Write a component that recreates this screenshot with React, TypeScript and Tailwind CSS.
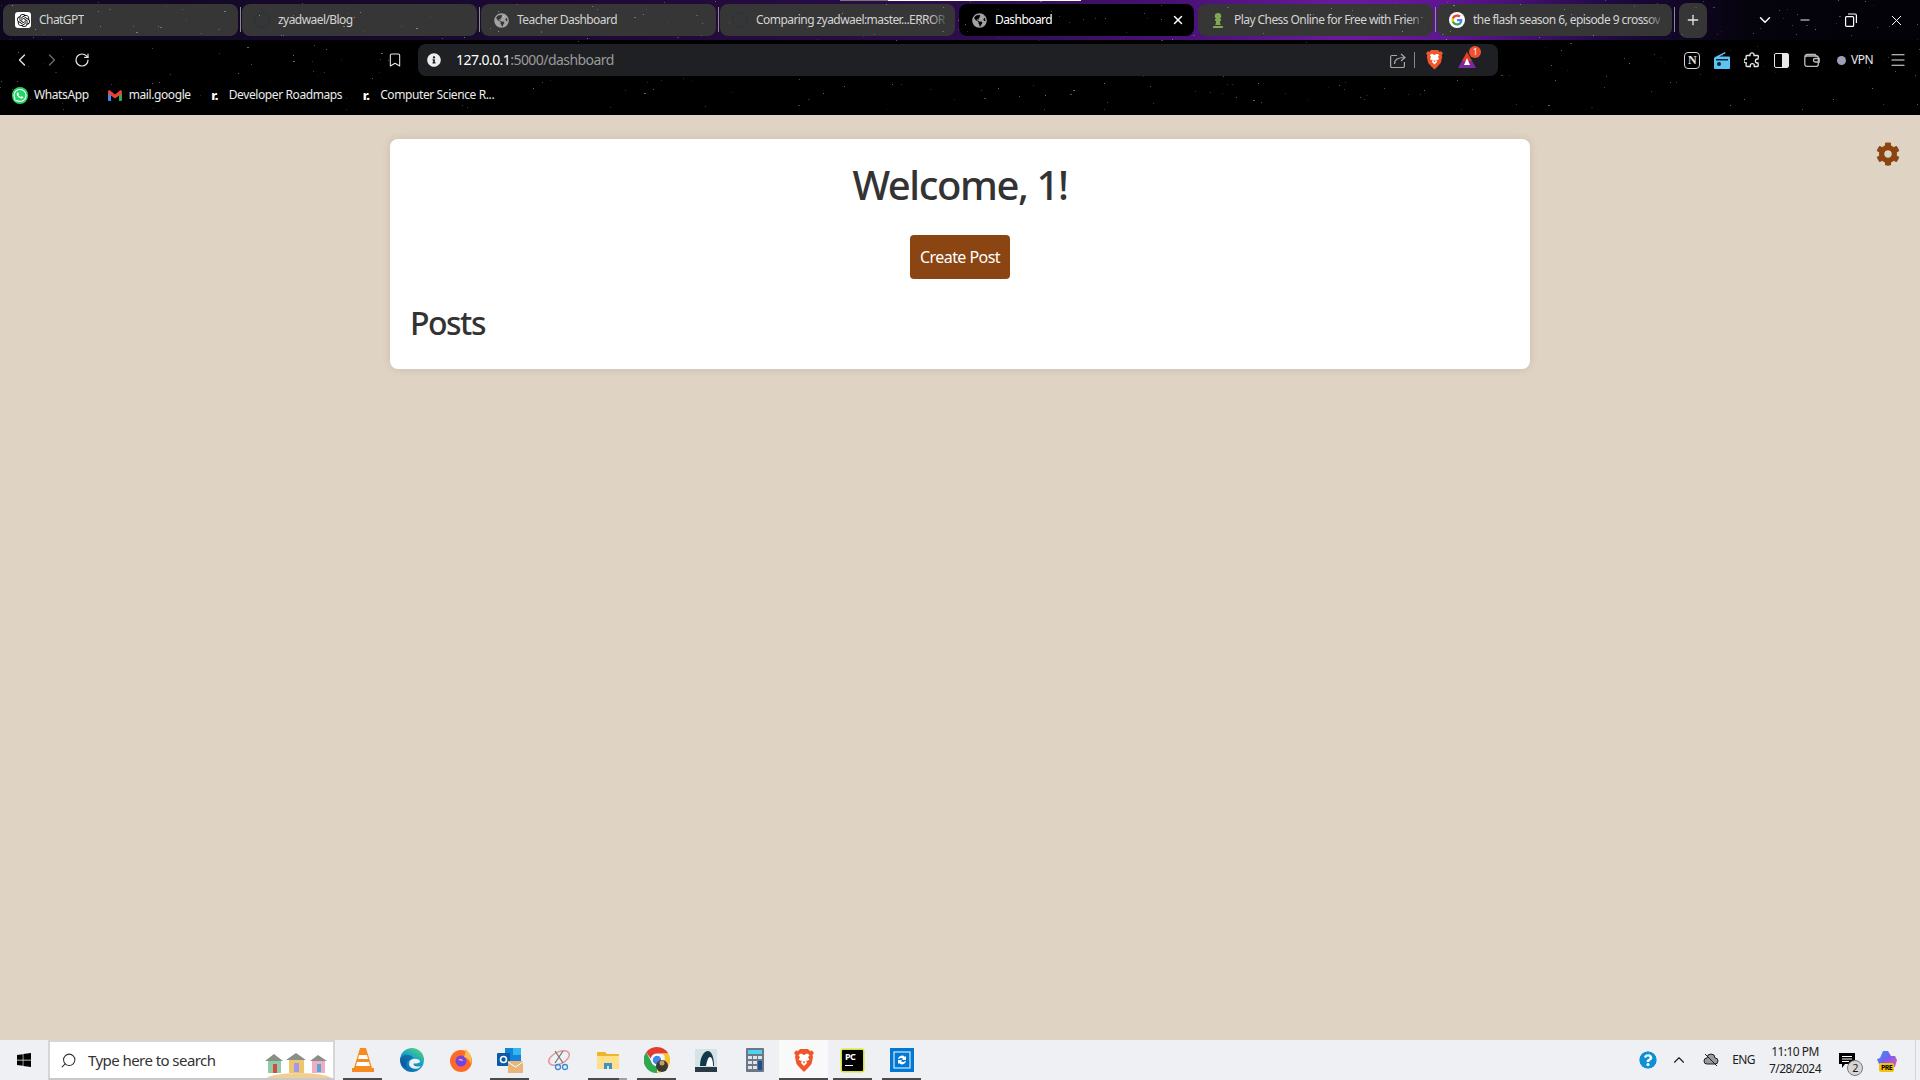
import {
  ChevronDown,
  ChevronLeft,
  ChevronRight,
  Bookmark,
  Menu,
  Minus,
  Plus,
  RotateCw,
  Search,
  X,
} from "lucide-react";
import { FaChessPawn, FaCog, FaGlobeAmericas, FaInfoCircle, FaQuestionCircle, FaWhatsapp, FaWindows } from "react-icons/fa";
import { SiOpenai } from "react-icons/si";
import type { ReactNode } from "react";

const uiFont = "[font-family:'Noto_Sans',sans-serif] tracking-[-0.56px]";

function Stars({ count, seed, height }: { count: number; seed: number; height: number }) {
  const dots = [];
  let s = seed;
  const next = () => {
    s = (s * 16807) % 2147483647;
    return s / 2147483647;
  };
  for (let i = 0; i < count; i++) {
    dots.push(
      <rect key={i} x={Math.floor(next() * 1920)} y={Math.floor(next() * height)} width={next() > 0.85 ? 2 : 1} height={1} fill="#fff" opacity={0.08 + next() * 0.35} />
    );
  }
  return (
    <svg className="absolute inset-0 pointer-events-none" width={1920} height={height}>
      {dots}
    </svg>
  );
}

function GoogleG({ size = 16 }: { size?: number }) {
  return (
    <svg width={size} height={size} viewBox="0 0 24 24">
      <circle cx="12" cy="12" r="12" fill="#fff" />
      <path fill="#4285F4" d="M20 12.200c0-.6-.1-1.100-.2-1.600H12v3.100h4.500c-.2 1-.8 1.900-1.700 2.500v2h2.700c1.600-1.400 2.500-3.500 2.500-6z" />
      <path fill="#34A853" d="M12 20.300c2.200 0 4.100-.7 5.500-2.100l-2.700-2c-.7.500-1.700.8-2.800.8-2.200 0-4-1.500-4.600-3.400H4.600v2.100c1.400 2.700 4.200 4.600 7.400 4.600z" />
      <path fill="#FBBC05" d="M7.400 13.600c-.3-1-.3-2.100 0-3.100V8.400H4.600c-1.100 2.200-1.100 5 0 7.300l2.800-2.100z" />
      <path fill="#EA4335" d="M12 7c1.200 0 2.300.4 3.200 1.200l2.400-2.400C16.100 4.400 14.200 3.700 12 3.700c-3.200 0-6 1.800-7.400 4.700l2.800 2.100C8 8.500 9.800 7 12 7z" />
    </svg>
  );
}

function BraveLion({ size = 18 }: { size?: number }) {
  return (
    <svg width={size} height={size * 1.15} viewBox="0 0 20 23">
      <path fill="#F1562B" d="M6 0h8l2 2 2-.5L20 4l-1.500 2 .5 2-1.500 7L14 19l-4 4-4-4-3.500-4L1 8l.5-2L0 4l2-2.500L4 2z" />
      <path fill="#fff" d="M10 6 7 4.500 4.500 6 6 8.500 4.500 10.500l2.500 1.500 1-1-1 3 3 3 3-3-1-3 1 1 2.500-1.500L14 8.500 15.500 6 13 4.500z" />
      <path fill="#F1562B" d="M8.500 12.500h3L10 14.500z" />
    </svg>
  );
}

function Tab({ icon, title, active, fade, sep }: { icon?: ReactNode; title: string; active?: boolean; fade?: boolean; sep?: boolean }) {
  return (
    <div
      className={`relative flex h-8 w-[235px] shrink-0 items-center rounded-lg pl-[10px] pr-[6px] text-xs ${
        active ? "bg-black text-white" : "bg-[#363636] text-[#d4d4d4]"
      }`}
    >
      <span className="flex w-[20px] shrink-0 items-center justify-center">{icon}</span>
      <span className="ml-[6px] overflow-hidden whitespace-nowrap">{title}</span>
      {fade && <span className="absolute right-[6px] h-full w-5 bg-gradient-to-r from-transparent to-[#363636]" />}
      {active && <X size={14} strokeWidth={2.5} className="ml-auto mr-[3px] shrink-0 text-white" />}
      {sep && <span className="absolute -right-[3px] top-[3px] h-[25px] w-px bg-[#8a8a8a]" />}
    </div>
  );
}

function BookmarkItem({ icon, label }: { icon: ReactNode; label: string }) {
  return (
    <div className="flex items-center gap-[6px] text-xs tracking-[-0.4px] text-[#ececec]">
      <span className="flex w-4 items-center justify-center">{icon}</span>
      <span className="whitespace-nowrap">{label}</span>
    </div>
  );
}

function TaskIcon({ children, bar, active, stacked }: { children: ReactNode; bar?: boolean; active?: boolean; stacked?: boolean }) {
  return (
    <div className={`relative flex h-10 w-[49px] items-center justify-center ${active ? "bg-[#f9f9fa]" : ""}`}>
      {children}
      {bar && (
        <span className={`absolute bottom-0 h-[2px] ${active ? "inset-x-0" : "inset-x-[5px]"} ${stacked ? "bg-gradient-to-r from-[#4a4a4a] from-[80%] to-[#a0a0a0] to-[80%]" : "bg-[#4a4a4a]"}`} />
      )}
    </div>
  );
}

export default function App() {
  return (
    <div className={`flex h-screen w-[1920px] flex-col overflow-hidden bg-[#dfd3c3] ${uiFont}`}>
      {/* browser chrome */}
      <header className="relative h-[115px] shrink-0 bg-black">
        <div className="relative flex h-10 items-center bg-[linear-gradient(90deg,#0f0720_0%,#1d0a33_30%,#2c0d4c_50%,#4a1278_62%,#6a1a9c_70%,#5c1590_76%,#1e0a40_84%,#05030c_91%,#020208_100%)]">
          <div className="absolute left-[840px] top-0 h-px w-[241px] bg-gradient-to-r from-[#777] from-20% to-white to-20%" />
          <div className="relative flex items-center gap-1 pl-[3px]">
            <Tab sep icon={<span className="flex h-4 w-4 items-center justify-center rounded-[3px] bg-white text-black"><SiOpenai size={13} /></span>} title="ChatGPT" />
            <Tab sep icon={<span className="h-4 w-4 rounded-full border border-[#26343d]" />} title="zyadwael/Blog" />
            <Tab sep icon={<FaGlobeAmericas size={15} className="text-[#a3a3a3]" />} title="Teacher Dashboard" />
            <Tab icon={<span className="h-4 w-4 rounded-full border border-[#26343d]" />} title="Comparing zyadwael:master...ERROR" fade />
            <Tab icon={<FaGlobeAmericas size={15} className="text-[#a3a3a3]" />} title="Dashboard" active />
            <Tab sep icon={<FaChessPawn size={16} className="text-[#7fa650]" />} title="Play Chess Online for Free with Frien" fade />
            <Tab sep icon={<GoogleG />} title="the flash season 6, episode 9 crossov" fade />
            <div className="ml-[3px] flex h-[35px] w-[28px] items-center justify-center rounded-lg bg-[#363636]">
              <Plus size={16} className="text-[#e5e5e5]" />
            </div>
          </div>
          <div className="relative ml-auto flex items-center pr-[15px] text-white">
            <ChevronDown size={18} className="mr-[24px]" />
            <Minus size={14} strokeWidth={1.6} className="mr-[33px]" />
            <svg width="12" height="14" viewBox="0 0 12 14" fill="none" stroke="#fff" strokeWidth="1.2" className="mr-[31px]">
              <rect x="0.600" y="3.600" width="8" height="9.800" rx="1" />
              <path d="M3 1h7a1.400 1.400 0 0 1 1.400 1.400V10" />
            </svg>
            <X size={17} strokeWidth={1.4} />
          </div>
          <Stars count={170} seed={77} height={40} />
        </div>
        <div className="relative flex h-10 items-center">
          <Stars count={130} seed={1234} height={40} />
          <div className="relative flex items-center pl-[12px] text-[#e8e8e8]">
            <ChevronLeft size={20} strokeWidth={1.6} />
            <ChevronRight size={20} strokeWidth={1.6} className="ml-[10px] text-[#6b6b6b]" />
            <RotateCw size={16} strokeWidth={1.8} className="ml-[12px]" />
            <Bookmark size={16} strokeWidth={1.6} className="ml-[297px]" />
          </div>
          <div className="relative ml-[15px] flex h-8 w-[1080px] items-center rounded-lg bg-[#1f2023] pl-[9px] text-sm">
            <FaInfoCircle size={14} className="text-[#ededed]" />
            <span className="ml-[15px] text-white">127.0.0.1<span className="text-[#9a9a9a]">:5000/dashboard</span></span>
            <svg width="16" height="15" viewBox="0 0 16 15" fill="none" stroke="#a8a8a8" strokeWidth="1.2" className="ml-auto">
              <path d="M7 2.500H2a1.400 1.400 0 0 0-1.400 1.400v9.300A1.400 1.400 0 0 0 2 14.500h11a1.400 1.400 0 0 0 1.400-1.400V9" />
              <path d="M4.500 11c0-4.500 3.500-6.500 10-6.500M11 1l4 3.500L11 8" />
            </svg>
            <span className="ml-[8px] h-4 w-px bg-[#888]" />
            <span className="ml-[11px] flex"><BraveLion size={17} /></span>
            <span className="relative ml-[14px] mr-[21px] flex">
              <svg width="20" height="18" viewBox="0 0 20 18">
                <path fill="#7b2a9e" d="M10 1 19 17H1z" />
                <path fill="#e2401c" d="M10 1 15 10H5z" />
                <path fill="#fff" d="M10 7 13 14H7z" />
              </svg>
              <span className="absolute -right-[4px] -top-[5px] flex h-[12px] w-[12px] items-center justify-center rounded-full bg-[#f0502e] text-[8px] leading-none text-white">1</span>
            </span>
          </div>
          <div className="relative ml-auto flex items-center pr-[13px] text-[#e8e8e8]">
            <span className="mr-[14px] flex h-[17px] w-[16px] items-center justify-center rounded-[4px] border-[1.5px] border-[#d8d8d8] text-[12px] font-bold leading-none [font-family:'Liberation_Serif',serif]">N</span>
            <svg width="16" height="17" viewBox="0 0 16 17" className="mr-[14px]">
              <path fill="#5cc3f5" d="M1 5 11 0l.6 1.200L5.500 4.500H15a1 1 0 0 1 1 1V16a1 1 0 0 1-1 1H1a1 1 0 0 1-1-1V6z" />
              <circle cx="5" cy="12" r="2" fill="#0b2530" />
              <rect x="2" y="7" width="12" height="1.500" fill="#0b2530" />
            </svg>
            <svg width="16" height="16" viewBox="0 0 16 16" fill="none" stroke="#e8e8e8" strokeWidth="1.300" className="mr-[14px]">
              <path d="M6 3.500V2.800a2 2 0 0 1 4 0v.7h3.500a1 1 0 0 1 .9 1L14 7h-.6a2 2 0 0 0 0 4h.6l.3 2.500a1 1 0 0 1-1 1h-3v-.8a2 2 0 0 0-4 0v.8H3a1 1 0 0 1-1-1l.4-2.500H1.900a2 2 0 0 1 0-4h.5L2 4.500a1 1 0 0 1 1-1z" />
            </svg>
            <span className="mr-[15px] flex h-[15px] w-[15px] rounded-[2px] border-[1.5px] border-[#e8e8e8]"><span className="ml-auto h-full w-1/2 bg-[#e8e8e8]" /></span>
            <svg width="16" height="14" viewBox="0 0 16 14" fill="none" stroke="#bdbdbd" strokeWidth="1.300" className="mr-[17px]">
              <path d="M1 3.500A2 2 0 0 1 3 1.500h8l1.500 2" />
              <rect x="0.800" y="3" width="13.500" height="10.300" rx="2" />
              <path d="M15.200 5.500h-4a1.500 1.500 0 0 0 0 3.500h4z" />
            </svg>
            <span className="h-[9px] w-[9px] rounded-full bg-[#9aa0b5]" />
            <span className="ml-[5px] text-[12px]">VPN</span>
            <Menu size={18} strokeWidth={1.6} className="ml-[16px]" />
          </div>
        </div>
        <div className="relative flex h-[30px] items-center">
          <Stars count={100} seed={4242} height={30} />
          <div className="relative flex items-center pl-3">
            <BookmarkItem icon={<FaWhatsapp size={17} className="rounded-full bg-[#25d366] p-[1px] text-white" />} label="WhatsApp" />
            <div className="ml-[18px]">
              <BookmarkItem
                icon={
                  <svg width="14" height="11" viewBox="0 0 14 11">
                    <path fill="#4285f4" d="M0 1.500h3V11H1a1 1 0 0 1-1-1z" />
                    <path fill="#34a853" d="M11 1.500h3V10a1 1 0 0 1-1 1h-2z" />
                    <path fill="#ea4335" d="M0 1 1.500 0 7 4.500 12.500 0 14 1v2.500l-7 5-7-5z" />
                  </svg>
                }
                label="mail.google"
              />
            </div>
            <div className="ml-[16px]">
              <BookmarkItem icon={<span className="text-[13px] font-extrabold leading-none text-white">r.</span>} label="Developer Roadmaps" />
            </div>
            <div className="ml-[16px]">
              <BookmarkItem icon={<span className="text-[13px] font-extrabold leading-none text-white">r.</span>} label="Computer Science R..." />
            </div>
          </div>
        </div>
      </header>

      {/* page */}
      <main className="relative flex-1 pt-6">
        <div className="mx-auto h-[230px] w-[1140px] rounded-lg bg-white p-5 text-[#333] shadow-[0_0_10px_rgba(0,0,0,0.1)]">
          <h1 className="text-center text-[40px] font-medium leading-[52px] tracking-[-1.4px]">Welcome, 1!</h1>
          <div className="mt-6 flex justify-center">
            <button className="h-11 w-[100px] rounded bg-[#8b4513] text-white">Create Post</button>
          </div>
          <h2 className="mt-[24px] text-[32px] font-medium leading-[40px] tracking-[-1.5px]">Posts</h2>
        </div>
        <FaCog size={24} className="absolute right-5 top-[27px] text-[#8b4513]" />
      </main>

      {/* taskbar */}
      <footer className="flex h-10 shrink-0 items-center bg-[#eef0f4]">
        <div className="flex w-12 items-center justify-center">
          <FaWindows size={16} className="text-black" />
        </div>
        <div className="relative flex h-10 w-[287px] items-center overflow-hidden border-2 border-b-[#c9c9c9] border-l-[#d6d6d6] border-r-[#d6d6d6] border-t-[#d6d6d6] bg-white pl-[10px] text-[15px] text-[#333]">
          <Search size={17} strokeWidth={1.5} className="-scale-x-100" />
          <span className="ml-[11px]">Type here to search</span>
          <svg width="68" height="27" viewBox="0 0 68 27" className="absolute bottom-0 right-0">
            <ellipse cx="34" cy="29" rx="34" ry="7" fill="#f0cf96" />
            <path fill="#8a8f86" d="M0 10 9 3l9 7zM21 9l10-7 10 7zM45 10l8-6 9 6z" />
            <rect x="3" y="10" width="13" height="12" fill="#8fcdaa" />
            <rect x="8" y="13" width="4" height="9" fill="#d94a3f" />
            <rect x="24" y="9" width="15" height="13" fill="#ecc66f" />
            <rect x="29" y="12" width="5" height="9" fill="#a597ea" />
            <rect x="47" y="10" width="13" height="12" fill="#f0aec6" />
            <rect x="52" y="13" width="4" height="8" fill="#5aa5d8" />
          </svg>
        </div>
        <div className="ml-[3px] flex">
          <TaskIcon bar>
            <svg width="22" height="24" viewBox="0 0 22 24"><path fill="#f68b1f" d="M8 0h6l6 20h2v4H0v-4h2z" /><path fill="#fff" d="M7 7h8l1 4H6zM5 14h12l1 4H4z" /></svg>
          </TaskIcon>
          <TaskIcon>
            <svg width="24" height="24" viewBox="0 0 24 24"><defs><linearGradient id="ed" x1="0.800" y1="0" x2="0.200" y2="1"><stop offset="0" stopColor="#52d67a" /><stop offset="0.45" stopColor="#16a0c8" /><stop offset="1" stopColor="#0c5fb0" /></linearGradient></defs><circle cx="12" cy="12" r="12" fill="url(#ed)" /><path fill="#eef0f4" d="M9.500 13.500c2-3.500 8.500-3.500 10.500-.5.500 2-3 2.500-6.500 2.500-.5 2.500 3 4 7.500 2.500-3 4.500-11 3.500-12-1.500z" /><path fill="#0b3f8a" opacity="0.5" d="M0 12c1-4 5-6 9-5s5 3 2 4-6 4-4 9C3 19 0 16 0 12z" /></svg>
          </TaskIcon>
          <TaskIcon>
            <svg width="24" height="24" viewBox="0 0 24 24"><circle cx="12" cy="13" r="11" fill="#ff6a2b" /><circle cx="12" cy="13" r="5.500" fill="#7542e5" /><path fill="#ffbd4f" d="M16 1c5 3 8 9 6 15-1-3-3-6-7-7 1-3 2-5 1-8z" /><path fill="#ffc95c" d="M9 12c2-2 5-1 5 1-1-.5-3-.5-5-1z" /></svg>
          </TaskIcon>
          <TaskIcon bar>
            <svg width="26" height="26" viewBox="0 0 26 26"><rect x="8" y="1" width="16" height="14" fill="#1384d9" /><rect x="16" y="1" width="8" height="7" fill="#36b5ee" /><rect x="0" y="6" width="13" height="13" rx="1" fill="#0a5aa8" /><circle cx="6.500" cy="12.500" r="3" fill="none" stroke="#fff" strokeWidth="1.600" /><rect x="11" y="14" width="15" height="12" fill="#e8b47a" /><path d="M11 15l7.500 5 7.500-5" fill="none" stroke="#fff" /></svg>
          </TaskIcon>
          <TaskIcon>
            <svg width="24" height="22" viewBox="0 0 24 22"><ellipse cx="12" cy="9" rx="11" ry="6" fill="none" stroke="#e79a9a" strokeWidth="1.500" transform="rotate(-25 12 9)" /><path d="M8 2l8 12M16 2 8 14" stroke="#777" strokeWidth="1.300" /><circle cx="18" cy="18" r="2.500" fill="none" stroke="#3a8ad1" strokeWidth="1.300" /><circle cx="11" cy="18" r="2.500" fill="none" stroke="#3a8ad1" strokeWidth="1.300" /></svg>
          </TaskIcon>
          <TaskIcon bar stacked>
            <svg width="22" height="18" viewBox="0 0 22 18"><path fill="#f0b429" d="M0 2a1 1 0 0 1 1-1h7l2 2h11a1 1 0 0 1 1 1v13a1 1 0 0 1-1 1H1a1 1 0 0 1-1-1z" /><path fill="#ffe08a" d="M0 5h22v12a1 1 0 0 1-1 1H1a1 1 0 0 1-1-1z" /><path fill="#3d8fd1" d="M7 18v-6h8v6h-3v-3h-2v3z" /></svg>
          </TaskIcon>
          <TaskIcon bar>
            <svg width="26" height="26" viewBox="0 0 26 26">
              <path fill="#e33b2e" d="M13 0a13 13 0 0 1 11.300 6.500H13a6.500 6.500 0 0 0-6.300 4.900L2.200 5.300A13 13 0 0 1 13 0z" />
              <path fill="#f9c22e" d="M24.300 6.500A13 13 0 0 1 13 26l5.600-9.700a6.500 6.500 0 0 0 0-9.800z" />
              <path fill="#2fa84f" d="M2.200 5.300l5.600 10.500A6.500 6.500 0 0 0 13 19.500L13 26A13 13 0 0 1 2.200 5.300z" />
              <circle cx="13" cy="13" r="5" fill="#3f87ee" stroke="#fff" strokeWidth="1.500" />
              <circle cx="18" cy="19" r="6" fill="#3a3a30" />
              <circle cx="18" cy="16" r="2.500" fill="#c99a6c" />
            </svg>
          </TaskIcon>
          <TaskIcon>
            <svg width="22" height="24" viewBox="0 0 22 24"><rect x="0" y="1" width="22" height="23" fill="#d4e4e6" /><path fill="#103a4a" d="M5 18C5 9 9 3 13 3c3 0 6 5 6 15z" /><path fill="#fff" d="M11 18c1-5 2-9 4-9 2 0 3 4 3 9z" /><rect y="19" width="22" height="5" fill="#2b3a42" /></svg>
          </TaskIcon>
          <TaskIcon>
            <svg width="18" height="24" viewBox="0 0 18 24"><rect width="18" height="24" rx="1" fill="#6b7686" /><rect x="2" y="2" width="14" height="4" fill="#4fd2ee" /><rect x="2" y="8" width="4" height="3" fill="#dfe3e8" /><rect x="7" y="8" width="4" height="3" fill="#dfe3e8" /><rect x="12" y="8" width="4" height="3" fill="#dfe3e8" /><rect x="2" y="13" width="4" height="3" fill="#dfe3e8" /><rect x="7" y="13" width="4" height="3" fill="#dfe3e8" /><rect x="12" y="13" width="4" height="9" fill="#1f4e8c" /><rect x="2" y="18" width="4" height="3" fill="#dfe3e8" /><rect x="7" y="18" width="4" height="3" fill="#dfe3e8" /></svg>
          </TaskIcon>
          <TaskIcon bar active>
            <BraveLion size={20} />
          </TaskIcon>
          <TaskIcon bar>
            <span className="flex h-[21px] w-[21px] flex-col rounded-[1px] bg-black pl-[3px] pt-px text-[9px] font-bold leading-[11px] text-[#21d789] shadow-[0_0_0_1.5px_#d8e02e]">
              <span className="text-white">PC</span>
              <span className="mt-[3px] h-px w-[8px] bg-white" />
            </span>
          </TaskIcon>
          <TaskIcon bar>
            <svg width="24" height="24" viewBox="0 0 24 24"><rect width="24" height="24" fill="#0078d4" /><rect x="4" y="4" width="16" height="16" fill="none" stroke="#fff" /><path d="M8 11a4 4 0 0 1 7-2l1-1v4h-4l1-1a2.500 2.500 0 0 0-4 0zM16 13a4 4 0 0 1-7 2l-1 1v-4h4l-1 1a2.500 2.500 0 0 0 4 0z" fill="#fff" /></svg>
          </TaskIcon>
        </div>
        <div className="ml-auto flex h-full items-center pr-[4px] text-[#1c1c1c]">
          <FaQuestionCircle size={18} className="rounded-full bg-white text-[#0f8fd6]" />
          <ChevronDown size={18} strokeWidth={1.5} className="ml-[13px] rotate-180" />
          <svg width="16" height="14" viewBox="0 0 16 14" className="ml-[15px]"><path d="M4 11a3 3 0 0 1 0-6 4 4 0 0 1 8 0 3 3 0 0 1 0 6z" fill="#999" stroke="#222" /><path d="M2 1l12 12" stroke="#222" /></svg>
          <span className="ml-[13px] text-xs">ENG</span>
          <span className="ml-[12px] flex w-[56px] flex-col items-center text-xs leading-[17px]">
            <span>11:10 PM</span>
            <span>7/28/2024</span>
          </span>
          <span className="relative ml-[16px] flex">
            <svg width="16" height="15" viewBox="0 0 16 15"><path fill="#000" d="M0 0h16v11H6l-3 4v-4H0z" /><path stroke="#fff" d="M3 3.500h10M3 6h10M3 8.500h7" /></svg>
            <span className="absolute -bottom-[8px] -right-[8px] flex h-[16px] w-[16px] items-center justify-center rounded-full border border-[#777] bg-[#d6d6d6] text-[11px] leading-none">2</span>
          </span>
          <span className="relative ml-[22px] flex">
            <svg width="20" height="18" viewBox="0 0 20 18"><defs><linearGradient id="co" x1="0" y1="0" x2="1" y2="1"><stop offset="0" stopColor="#2a9df4" /><stop offset="0.5" stopColor="#7b5cf0" /><stop offset="1" stopColor="#f05aa6" /></linearGradient></defs><path fill="url(#co)" d="M6 0h5l3 5h4l2 4-2 7h-6l-3-4H5L2 13 0 8l3-1z" /></svg>
            <span className="absolute -bottom-[3px] left-[2px] rounded-[2px] bg-[#f4c20d] px-[2px] text-[7px] font-bold leading-[9px] text-black">PRE</span>
          </span>
          <span className="ml-[18px] h-full w-px bg-[#d2d4d8]" />
        </div>
      </footer>
    </div>
  );
}
